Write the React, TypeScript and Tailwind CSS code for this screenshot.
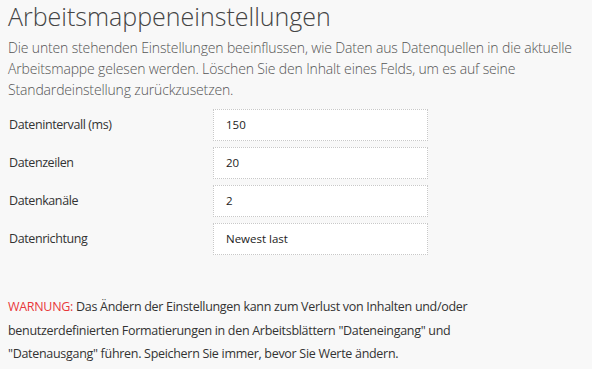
const fields = [
  { label: "Datenintervall (ms)", value: "150" },
  { label: "Datenzeilen", value: "20" },
  { label: "Datenkanäle", value: "2" },
  { label: "Datenrichtung", value: "Newest last" },
]

export default function App() {
  return (
    <div
      className="w-[592px] h-[369px] overflow-hidden bg-[#f8f8f8] px-2 text-[#333]"
      style={{ fontFamily: '"Open Sans", "Noto Sans", sans-serif' }}
    >
      <h1 className="text-[25px] font-light leading-[32px] text-[#444]">
        Arbeitsmappeneinstellungen
      </h1>
      <p className="text-[14px] font-light leading-[21px] mt-[5px] text-[#555] tracking-[-0.15px]">
        Die unten stehenden Einstellungen beeinflussen, wie Daten aus Datenquellen in die aktuelle
        Arbeitsmappe gelesen werden. Löschen Sie den Inhalt eines Felds, um es auf seine
        Standardeinstellung zurückzusetzen.
      </p>
      <div className="mt-[9px] flex flex-col gap-[6px]">
        {fields.map((f) => (
          <div key={f.label} className="flex items-center">
            <div className="w-[205px] text-[12.5px] tracking-[-0.4px] pl-[1px]">{f.label}</div>
            <div className="w-[215px] h-[32px] bg-white border border-dotted border-[#c8c8c8] flex items-center px-[12px] text-[11.5px] text-[#222]">
              {f.value}
            </div>
          </div>
        ))}
      </div>
      <p className="mt-[40px] text-[12.5px] leading-[23.5px] tracking-[-0.3px]">
        <span className="text-[#e8383b]">WARNUNG:</span> Das Ändern der Einstellungen kann zum Verlust von Inhalten und/oder
        <br />
        benutzerdefinierten Formatierungen in den Arbeitsblättern "Dateneingang" und
        <br />
        "Datenausgang" führen. Speichern Sie immer, bevor Sie Werte ändern.
      </p>
    </div>
  )
}
